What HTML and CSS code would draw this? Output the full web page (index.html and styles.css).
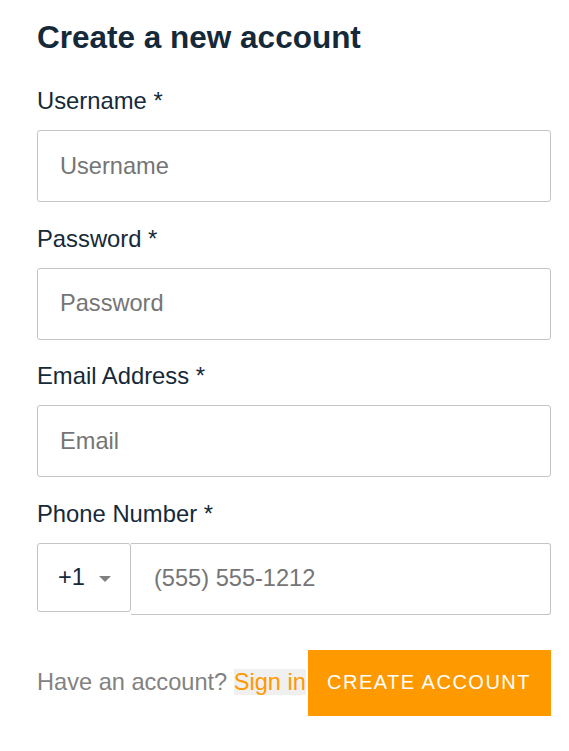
FILE: index.html
```html
<!DOCTYPE html>
<html lang="en">
<head>
<meta charset="utf-8">
<title>Create a new account</title>
<link rel="stylesheet" href="styles.css">
</head>
<body>
<div class="form">
  <h1 class="title">Create a new account</h1>
  <div class="field">
    <label class="label">Username *</label>
    <input class="input" type="text" placeholder="Username">
  </div>
  <div class="field">
    <label class="label">Password *</label>
    <input class="input" type="password" placeholder="Password">
  </div>
  <div class="field">
    <label class="label">Email Address *</label>
    <input class="input" type="email" placeholder="Email">
  </div>
  <div class="field">
    <label class="label">Phone Number *</label>
    <div class="phone">
      <div class="select">+1<span class="caret"></span></div>
      <input class="input phone-input" type="tel" placeholder="(555) 555-1212">
    </div>
  </div>
  <div class="footer">
    <span class="muted">Have an account? <a class="link">Sign in</a></span>
    <button class="btn">CREATE ACCOUNT</button>
  </div>
</div>
</body>
</html>
```
FILE: styles.css
```css
html, body {
  margin: 0;
  padding: 0;
  background: #ffffff;
}
body {
  font-family: "Liberation Sans", Arial, sans-serif;
  color: #152939;
}
.form {
  padding: 19px 18px 0 37px;
}
.title {
  margin: 0 0 32px 0;
  font-size: 31.5px;
  line-height: 36px;
  font-weight: bold;
  color: #152939;
}
.field {
  margin-bottom: 22.5px;
}
.label {
  display: block;
  font-size: 23.8px;
  line-height: 28px;
  margin-bottom: 15px;
  color: #152939;
}
.input {
  display: block;
  box-sizing: border-box;
  width: 100%;
  height: 72px;
  margin: 0;
  padding: 0 22px;
  border: 1px solid #c4c4c4;
  border-radius: 3px;
  font-family: "Liberation Sans", Arial, sans-serif;
  font-size: 23.6px;
  color: #152939;
  background: #fff;
  outline: none;
}
.input::placeholder {
  color: #757575;
}
.phone {
  display: flex;
  align-items: flex-start;
}
.select {
  box-sizing: border-box;
  flex: 0 0 94px;
  height: 69px;
  display: flex;
  align-items: center;
  padding-left: 20px;
  border: 1px solid #c4c4c4;
  border-radius: 3px;
  font-size: 23.6px;
  color: #152939;
}
.caret {
  width: 0;
  height: 0;
  margin-left: 14px;
  margin-top: 4px;
  border-left: 6.5px solid transparent;
  border-right: 6.5px solid transparent;
  border-top: 6px solid #808080;
}
.phone-input {
  flex: 1;
  width: auto;
  border-left: none;
  border-radius: 0 3px 3px 0;
  padding-left: 23px;
  height: 72px;
}
.footer {
  margin-top: 35px;
  display: flex;
  align-items: center;
  justify-content: space-between;
  height: 66px;
}
.muted {
  font-size: 23.6px;
  color: #828282;
  white-space: nowrap;
}
.link {
  color: #ff9900;
  background: #f0f0f0;
  text-decoration: none;
}
.btn {
  flex-shrink: 0;
  white-space: nowrap;
  height: 66px;
  padding: 0 20px 0 19px;
  border: none;
  background: #ff9900;
  color: #ffffff;
  font-family: "Liberation Sans", Arial, sans-serif;
  font-size: 20px;
  letter-spacing: 1.5px;
}
```
